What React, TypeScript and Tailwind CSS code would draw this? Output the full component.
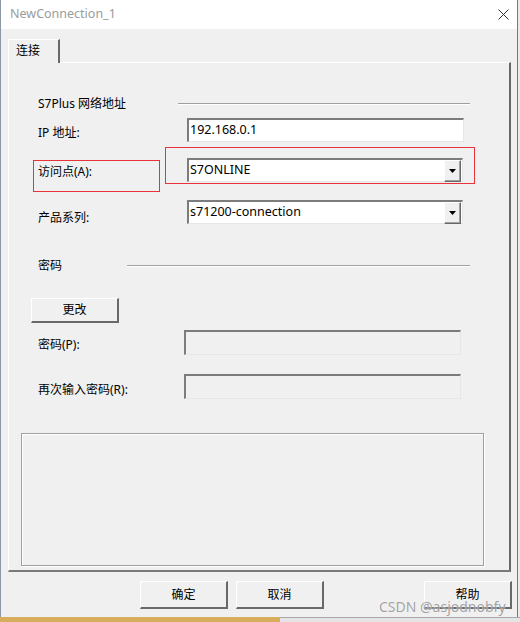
import React from 'react';

const Separator = ({ w }: { w: string }) => (
  <div className={`${w} h-[2px] border-t border-t-[#a0a0a0] border-b border-b-white`} />
);

const Arrow = () => (
  <svg width="7" height="4" viewBox="0 0 7 4">
    <path d="M0 0 H7 L3.5 4 Z" fill="#000" />
  </svg>
);

interface FieldProps {
  label: string;
  labelW: string;
  labelMt: string;
  inputW: string;
  h: string;
  mt: string;
  children?: React.ReactNode;
  disabled?: boolean;
}

const Field: React.FC<FieldProps> = ({ label, labelW, labelMt, inputW, h, mt, children, disabled }) => (
  <div className={`flex items-start ${h} ${mt} ml-[29px]`}>
    <div className={`${labelW} ${labelMt} shrink-0 leading-[16px]`}>{label}</div>
    <div
      className={`${inputW} h-full flex items-center border-t-2 border-l-2 border-t-[#7c7c7c] border-l-[#7c7c7c] border-b border-r border-b-[#e6e6e6] border-r-[#e6e6e6] ${
        disabled ? 'bg-[#f0f0f0]' : 'bg-white'
      }`}
    >
      {children}
    </div>
  </div>
);

const Combo = ({ value }: { value: string }) => (
  <div className="flex items-center w-full h-full">
    <span className="flex-1 pl-[1px] text-[12.5px]">{value}</span>
    <div className="w-[17px] h-[22px] mr-[1px] flex items-center justify-center bg-[#f0f0f0] border-t border-l border-white border-b border-r border-b-[#696969] border-r-[#696969] shadow-[inset_-1px_-1px_0_#a0a0a0]">
      <Arrow />
    </div>
  </div>
);

const Button = ({ label, className = '' }: { label: string; className?: string }) => (
  <div
    className={`w-[88px] flex items-center justify-center bg-[#f0f0f0] border-t border-l border-white border-b-2 border-r-2 border-b-[#696969] border-r-[#696969] ${className}`}
  >
    {label}
  </div>
);

export default function App() {
  return (
    <div className="relative w-[520px] h-[622px] overflow-hidden bg-[#eaeaea] font-['Noto_Sans','Noto_Sans_CJK_SC',sans-serif] text-[12px] text-black">
      <div className="w-[518px] h-[617px] flex flex-col bg-[#f0f0f0] border-l border-l-[#8d98a6] border-r border-r-[#7a7a7a]">
        {/* title bar */}
        <div className="h-[29px] shrink-0 bg-white flex items-center justify-between pl-[9px] pr-[8px]">
          <span className="text-[#9b9b9b] text-[12.5px]">NewConnection_1</span>
          <svg width="11" height="11" viewBox="0 0 11 11">
            <path d="M0.5 0.5 L10.5 10.5 M10.5 0.5 L0.5 10.5" stroke="#333" strokeWidth="1" />
          </svg>
        </div>

        {/* tab */}
        <div className="pt-[10px] pl-[7px] flex">
          <div className="relative z-10 -mb-px w-[52px] h-[24px] bg-[#f0f0f0] border-t border-l border-white border-r-2 border-r-[#696969] pl-[7px] pt-[2px]">
            连接
          </div>
        </div>

        {/* panel */}
        <div className="ml-[7px] w-[503px] h-[510px] shrink-0 flex flex-col border-t border-l border-white border-r-2 border-r-[#696969] border-b-2 border-b-[#7a7a7a]">
          <div className="flex items-center h-[16px] mt-[33px] ml-[29px]">
            <div className="w-[140px] shrink-0">S7Plus 网络地址</div>
            <Separator w="w-[292px]" />
          </div>

          <Field label="IP 地址:" labelW="w-[149px]" labelMt="mt-[7px]" inputW="w-[277px]" h="h-[24px]" mt="mt-[6px]">
            <span className="pl-[1px] text-[12.5px]">192.168.0.1</span>
          </Field>

          <Field label="访问点(A):" labelW="w-[149px]" labelMt="mt-[6px]" inputW="w-[276px]" h="h-[24px]" mt="mt-[16px]">
            <Combo value="S7ONLINE" />
          </Field>

          <Field label="产品系列:" labelW="w-[149px]" labelMt="mt-[10px]" inputW="w-[276px]" h="h-[24px]" mt="mt-[18px]">
            <Combo value="s71200-connection" />
          </Field>

          <div className="flex items-center h-[16px] mt-[34px] ml-[29px]">
            <div className="w-[89px] shrink-0">密码</div>
            <Separator w="w-[343px]" />
          </div>

          <Button label="更改" className="h-[25px] mt-[24px] ml-[22px]" />

          <Field label="密码(P):" labelW="w-[146px]" labelMt="mt-[7px]" inputW="w-[277px]" h="h-[25px]" mt="mt-[7px]" disabled />
          <Field label="再次输入密码(R):" labelW="w-[146px]" labelMt="mt-[8px]" inputW="w-[277px]" h="h-[25px]" mt="mt-[19px]" disabled />

          <div className="ml-[12px] mt-[34px] w-[463px] h-[133px] border border-[#a0a0a0] shadow-[inset_1px_1px_0_#fff,1px_1px_0_#fff]" />
        </div>

        {/* buttons */}
        <div className="flex mt-[9px] h-[28px]">
          <Button label="确定" className="ml-[139px]" />
          <Button label="取消" className="ml-[8px]" />
          <Button label="帮助" className="ml-[100px]" />
        </div>
      </div>

      {/* bottom edge */}
      <div className="flex h-[5px]">
        <div className="w-[280px] bg-[#d8ae5c]" />
        <div className="flex-1 bg-[#e4e4e4] border-t border-[#a8a8a8]" />
      </div>

      {/* red annotation boxes */}
      <div className="absolute left-[33px] top-[160px] w-[127px] h-[32px] border border-[#e8333a]" />
      <div className="absolute left-[165px] top-[147px] w-[310px] h-[37px] border border-[#e8333a]" />

      {/* watermark */}
      <div className="absolute left-[379px] top-[596px] text-[14px] text-[#8f8f8f] opacity-80 [text-shadow:0_0_1px_#fff,0_0_1px_#fff] font-['Noto_Sans',sans-serif]">
        CSDN @asjodnobfy
      </div>
    </div>
  );
}
